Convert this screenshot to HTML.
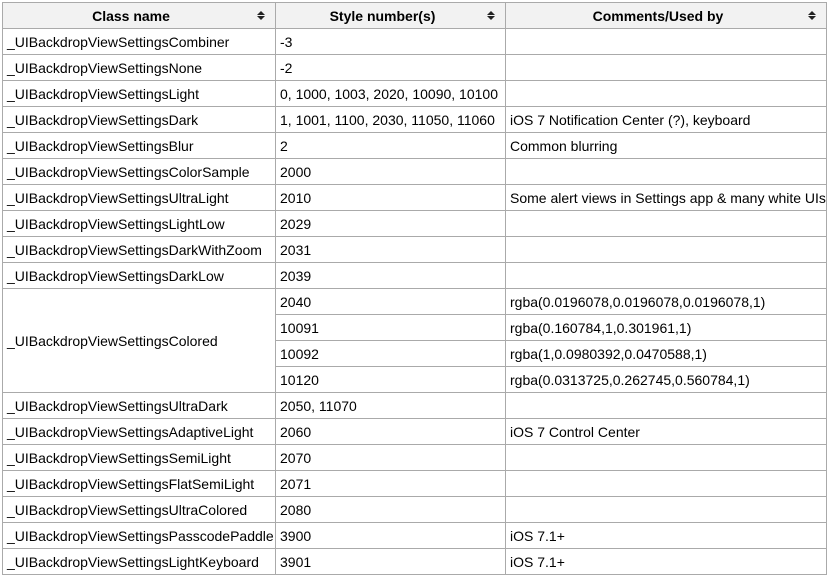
<!DOCTYPE html>
<html><head><style>
body{margin:0;background:#fff;}
table{position:absolute;left:2px;top:2px;border-collapse:collapse;table-layout:fixed;font-family:"Liberation Sans",Arial,sans-serif;font-size:14px;line-height:16px;color:#000;}
td,th{border:1px solid #aaa;height:25px;padding:0 0 0 4px;white-space:nowrap;overflow:hidden;box-sizing:content-box;}
th{background:#f2f2f2;font-weight:bold;text-align:center;position:relative;padding:0 20px 0 4px;}
th:after{content:"";position:absolute;right:10px;top:8px;width:0;height:0;border-left:4px solid transparent;border-right:4px solid transparent;border-bottom:4px solid #222;}
th:before{content:"";position:absolute;right:10px;top:13px;width:0;height:0;border-left:4px solid transparent;border-right:4px solid transparent;border-top:4px solid #222;}
</style></head><body>
<table>
<colgroup><col style="width:273px"><col style="width:230px"><col style="width:321px"></colgroup>
<tr><th>Class name</th><th>Style number(s)</th><th>Comments/Used by</th></tr>
<tr><td>_UIBackdropViewSettingsCombiner</td><td>-3</td><td></td></tr>
<tr><td>_UIBackdropViewSettingsNone</td><td>-2</td><td></td></tr>
<tr><td>_UIBackdropViewSettingsLight</td><td>0, 1000, 1003, 2020, 10090, 10100</td><td></td></tr>
<tr><td>_UIBackdropViewSettingsDark</td><td>1, 1001, 1100, 2030, 11050, 11060</td><td>iOS 7 Notification Center (?), keyboard</td></tr>
<tr><td>_UIBackdropViewSettingsBlur</td><td>2</td><td>Common blurring</td></tr>
<tr><td>_UIBackdropViewSettingsColorSample</td><td>2000</td><td></td></tr>
<tr><td>_UIBackdropViewSettingsUltraLight</td><td>2010</td><td>Some alert views in Settings app &amp; many white UIs</td></tr>
<tr><td>_UIBackdropViewSettingsLightLow</td><td>2029</td><td></td></tr>
<tr><td>_UIBackdropViewSettingsDarkWithZoom</td><td>2031</td><td></td></tr>
<tr><td>_UIBackdropViewSettingsDarkLow</td><td>2039</td><td></td></tr>
<tr><td rowspan="4">_UIBackdropViewSettingsColored</td><td>2040</td><td>rgba(0.0196078,0.0196078,0.0196078,1)</td></tr>
<tr><td>10091</td><td>rgba(0.160784,1,0.301961,1)</td></tr>
<tr><td>10092</td><td>rgba(1,0.0980392,0.0470588,1)</td></tr>
<tr><td>10120</td><td>rgba(0.0313725,0.262745,0.560784,1)</td></tr>
<tr><td>_UIBackdropViewSettingsUltraDark</td><td>2050, 11070</td><td></td></tr>
<tr><td>_UIBackdropViewSettingsAdaptiveLight</td><td>2060</td><td>iOS 7 Control Center</td></tr>
<tr><td>_UIBackdropViewSettingsSemiLight</td><td>2070</td><td></td></tr>
<tr><td>_UIBackdropViewSettingsFlatSemiLight</td><td>2071</td><td></td></tr>
<tr><td>_UIBackdropViewSettingsUltraColored</td><td>2080</td><td></td></tr>
<tr><td>_UIBackdropViewSettingsPasscodePaddle</td><td>3900</td><td>iOS 7.1+</td></tr>
<tr><td>_UIBackdropViewSettingsLightKeyboard</td><td>3901</td><td>iOS 7.1+</td></tr>
</table>
</body></html>
